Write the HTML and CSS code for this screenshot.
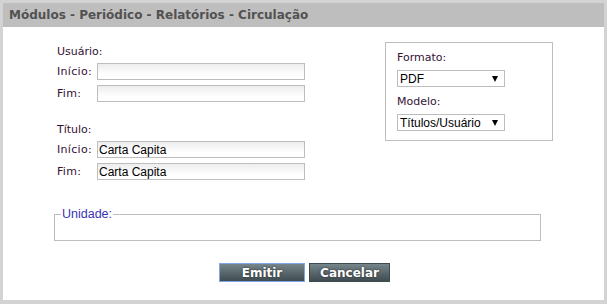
FILE: index.html
```html
<!DOCTYPE html>
<html lang="pt-BR">
<head>
    <meta charset="UTF-8">
    <meta name="viewport" content="width=device-width, initial-scale=1.0">
    <title>Relatórios - Circulação</title>
    <link rel="stylesheet" href="styles.css">
</head>
<body>
    <div class="panel">
        <div class="panel-header">Módulos - Periódico - Relatórios - Circulação</div>

        <form class="panel-body" onsubmit="return false">
            <div class="top-row">
                <div class="ranges">
                    <div class="group">
                        <div class="group-title">Usuário:</div>
                        <div class="row">
                            <label>Início:</label>
                            <input type="text">
                        </div>
                        <div class="row">
                            <label>Fim:</label>
                            <input type="text">
                        </div>
                    </div>

                    <div class="group">
                        <div class="group-title">Título:</div>
                        <div class="row">
                            <label>Início:</label>
                            <input type="text" value="Carta Capita">
                        </div>
                        <div class="row">
                            <label>Fim:</label>
                            <input type="text" value="Carta Capita">
                        </div>
                    </div>
                </div>

                <div class="options">
                    <div class="option-label">Formato:</div>
                    <div class="select-wrap">
                        <select>
                            <option>PDF</option>
                            <option>XLS</option>
                        </select>
                    </div>
                    <div class="option-label">Modelo:</div>
                    <div class="select-wrap">
                        <select>
                            <option>Títulos/Usuário</option>
                            <option>Usuário/Títulos</option>
                        </select>
                    </div>
                </div>
            </div>

            <fieldset class="unit-box">
                <legend>Unidade:</legend>
                <div class="unit-list"></div>
            </fieldset>

            <div class="actions">
                <button type="submit" class="btn btn-focus">Emitir</button>
                <button type="button" class="btn">Cancelar</button>
            </div>
        </form>
    </div>
</body>
</html>
```

FILE: styles.css
```css
* {
    box-sizing: border-box;
    margin: 0;
    padding: 0;
}

body {
    background-color: #d3d3d3;
    font-family: "DejaVu Sans", Verdana, sans-serif;
    font-size: 11px;
    color: #331133;
}

.panel {
    margin: 3px 3px 0 3px;
    height: 297px;
    background: white;
}

.panel-header {
    height: 24px;
    line-height: 24px;
    padding-left: 6px;
    background-color: #bebebe;
    color: #525252;
    font-weight: bold;
    font-size: 12px;
}

.panel-body {
    padding-top: 15px;
}

.top-row {
    display: flex;
    align-items: flex-start;
}

.ranges {
    margin-left: 54px;
    margin-top: 3px;
    width: 248px;
}

.group + .group {
    margin-top: 21px;
}

.group-title {
    line-height: 14px;
    margin-bottom: 4px;
}

.row {
    display: flex;
    align-items: center;
    height: 17px;
}

.row + .row {
    margin-top: 5px;
}

.row label {
    width: 40px;
    letter-spacing: 0.3px;
}

.row input {
    width: 208px;
    height: 17px;
    border: 1px solid #bdbdbd;
    background: linear-gradient(#ededed, #ffffff 70%);
    font-family: "Liberation Sans", Arial, sans-serif;
    font-size: 12px;
    color: #000;
    padding: 0 1px;
    outline: none;
}

.options {
    margin-left: 80px;
    width: 168px;
    border: 1px solid #bdbdbd;
    padding: 8px 11px 9px 11px;
}

.option-label {
    line-height: 14px;
    margin-bottom: 5px;
}

.select-wrap + .option-label {
    margin-top: 8px;
}

.select-wrap {
    position: relative;
    width: 108px;
}

.select-wrap::after {
    content: "";
    position: absolute;
    right: 7px;
    top: 6px;
    border-left: 3.5px solid transparent;
    border-right: 3.5px solid transparent;
    border-top: 6px solid #000;
}

.select-wrap select {
    appearance: none;
    width: 108px;
    height: 17px;
    border: 1px solid #bdbdbd;
    background: white;
    font-family: "Liberation Sans", Arial, sans-serif;
    font-size: 12px;
    color: #000;
    padding: 0 0 0 2px;
    outline: none;
}

.unit-box {
    margin: 27px 0 0 51px;
    width: 487px;
    border: 1px solid #bdbdbd;
    padding: 0 6px;
}

.unit-box legend {
    padding: 0 1px;
    font-family: "Liberation Sans", Arial, sans-serif;
    font-size: 12.5px;
    line-height: 15px;
    color: #3a33b8;
}

.unit-list {
    height: 18px;
}

.actions {
    margin-top: 22px;
    display: flex;
    justify-content: center;
    gap: 4px;
    padding-left: 2px;
}

.btn {
    width: 86px;
    height: 19px;
    border: 1px solid #3f4a4f;
    background: linear-gradient(#75858a, #3f4c51);
    color: white;
    font-family: "DejaVu Sans", Verdana, sans-serif;
    font-weight: bold;
    font-size: 12px;
    text-shadow: 0 0 2px #222;
    cursor: pointer;
}

.btn + .btn {
    width: 81px;
}

.btn-focus {
    border-color: #7fa6e8;
}
```
